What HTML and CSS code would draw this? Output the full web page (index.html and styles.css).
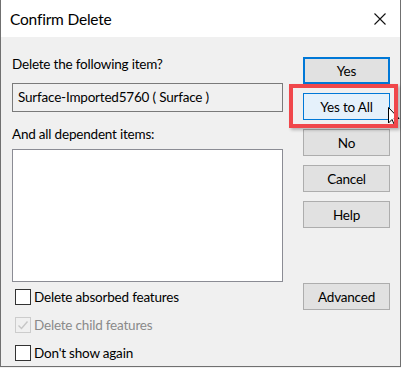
FILE: index.html
```html
<!DOCTYPE html>
<html>
<head>
<meta charset="utf-8">
<link rel="stylesheet" href="styles.css">
</head>
<body>
<div class="window">
  <div class="titlebar">
    <span class="title">Confirm Delete</span>
    <svg class="close" width="12" height="12" viewBox="0 0 12 12"><path d="M0.5 0.5 L11.5 11.5 M11.5 0.5 L0.5 11.5" stroke="#111" stroke-width="1.1" fill="none"/></svg>
  </div>
  <div class="content">
    <div class="left">
      <div class="label first">Delete the following item?</div>
      <div class="field">Surface-Imported5760 ( Surface )</div>
      <div class="label second">And all dependent items:</div>
      <div class="listbox"></div>
      <div class="checks">
        <label class="check"><span class="box"></span><span>Delete absorbed features</span></label>
        <label class="check disabled"><span class="box"><svg width="14" height="14" viewBox="0 0 14 14"><path d="M2.5 7.5 L5.5 10.5 L11.5 3.5" stroke="#c6c6c6" stroke-width="1.4" fill="none"/></svg></span><span>Delete child features</span></label>
        <label class="check"><span class="box"></span><span>Don't show again</span></label>
      </div>
    </div>
    <div class="right">
      <div class="btn default">Yes</div>
      <div class="btn hover">Yes to All</div>
      <div class="btn">No</div>
      <div class="btn">Cancel</div>
      <div class="btn">Help</div>
      <div class="btn advanced">Advanced</div>
    </div>
  </div>
  <svg class="cursor" width="12" height="19" viewBox="0 0 12 19"><path d="M0.5 0.5 L0.5 16 L4 12.5 L6.5 18 L8.5 17 L6 11.5 L11 11.5 Z" fill="#fff" stroke="#000" stroke-width="1"/></svg>
  <div class="highlight"></div>
</div>
</body>
</html>
```
FILE: styles.css
```css
html, body {
  margin: 0;
  padding: 0;
  background: #f0f0f0;
}
body {
  width: 401px;
  height: 368px;
  overflow: hidden;
  font-family: Lato, "Noto Sans", sans-serif;
  color: #000;
}
.window {
  position: relative;
  box-sizing: border-box;
  width: 401px;
  height: 367px;
  border-left: 1px solid #707070;
  border-right: 1px solid #707070;
  border-bottom: 1px solid #707070;
  background: #f0f0f0;
}
.titlebar {
  height: 37px;
  background: #fff;
  display: flex;
  align-items: center;
  justify-content: space-between;
  padding: 0 14px 0 9px;
}
.title {
  font-size: 15.5px;
  letter-spacing: -0.2px;
  color: #000;
  margin-top: 1px;
}
.close {
  display: block;
}
.content {
  display: grid;
  grid-template-columns: 271px 87px;
  column-gap: 20px;
  padding-left: 11px;
}
.left {
  display: flex;
  flex-direction: column;
}
.label {
  font-size: 13.5px;
  letter-spacing: -0.2px;
  line-height: 18px;
}
.label.first {
  margin-top: 18px;
}
.field {
  margin-top: 10px;
  box-sizing: border-box;
  height: 29px;
  border: 1px solid #7a7a7a;
  background: #f0f0f0;
  font-size: 13.5px;
  letter-spacing: -0.2px;
  line-height: 26px;
  padding-left: 5px;
}
.label.second {
  margin-top: 13px;
}
.listbox {
  margin-top: 6px;
  box-sizing: border-box;
  height: 133px;
  border: 1px solid #8b8c94;
  background: #fff;
}
.checks {
  display: flex;
  flex-direction: column;
  gap: 12px;
  margin-top: 7px;
  padding-left: 3px;
}
.check {
  display: flex;
  align-items: center;
  gap: 3px;
  font-size: 13.5px;
  letter-spacing: -0.2px;
  line-height: 16px;
}
.box {
  box-sizing: border-box;
  width: 16px;
  height: 16px;
  border: 1px solid #333;
  background: #fff;
  display: flex;
  align-items: center;
  justify-content: center;
}
.check.disabled {
  color: #8a8a8a;
}
.check.disabled .box {
  border-color: #cccccc;
  background: #f0f0f0;
}
.right {
  display: flex;
  flex-direction: column;
  gap: 9px;
  padding-top: 20px;
}
.btn {
  box-sizing: border-box;
  height: 27px;
  border: 1px solid #adadad;
  background: #e1e1e1;
  font-size: 13.5px;
  letter-spacing: -0.2px;
  display: flex;
  align-items: center;
  justify-content: center;
}
.btn.default {
  border: 2px solid #0078d7;
}
.btn.hover {
  border: 1px solid #0078d7;
  background: #e5f1fb;
}
.btn.advanced {
  margin-top: 46px;
}
.cursor {
  position: absolute;
  left: 387px;
  top: 107px;
}
.highlight {
  position: absolute;
  left: 288px;
  top: 84px;
  width: 109px;
  height: 44px;
  box-sizing: border-box;
  border: 4px solid #f0474b;
  box-shadow: 2px 2px 3px rgba(0,0,0,0.25);
}
```
